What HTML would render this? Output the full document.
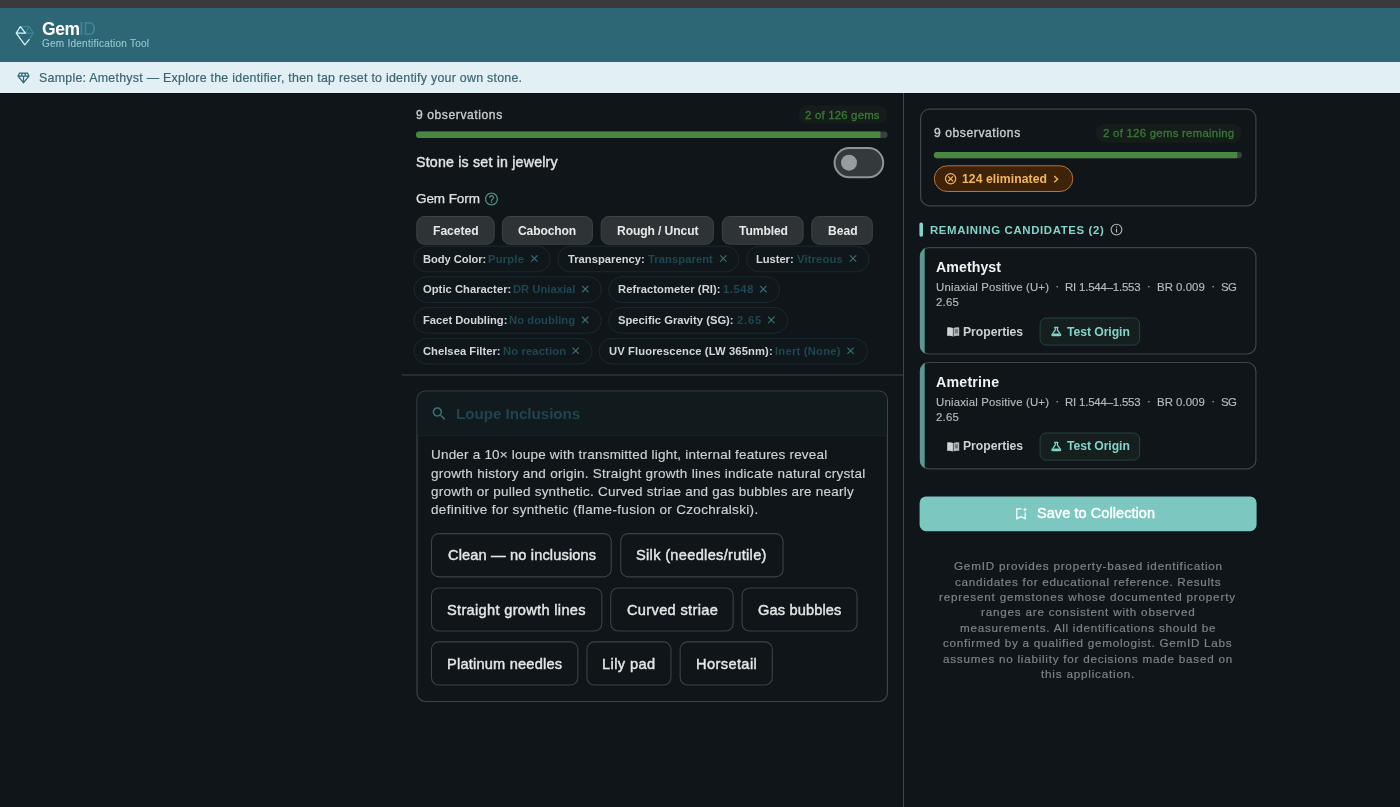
<!DOCTYPE html>
<html lang="en"><head><meta charset="utf-8"><title>GemID</title>
<style>
html,body{margin:0;padding:0;}
body{width:1400px;height:807px;overflow:hidden;position:relative;background:#0f1518;font-family:"Liberation Sans",sans-serif;-webkit-font-smoothing:antialiased;}
.r{position:absolute;box-sizing:border-box;display:block;}
.t{position:absolute;white-space:nowrap;line-height:1;margin:0;padding:0;will-change:transform;}
</style></head><body>
<svg class="r" style="left:0;top:0" width="1400" height="807" viewBox="0 0 1400 807" fill="none">
<path d="M0 0H1400V8H0V0Z" fill="#3a3a3a"/>
<path d="M0 8H1400V62H0V8Z" fill="#2d6775"/>
<path d="M0 62H1400V93H0V62Z" fill="#e2eff4"/>
<path d="M0 93H1400V94H0V93Z" fill="#0b1013"/>
<svg x="15.00" y="25.00" width="20" height="22" viewBox="15 25 20 22" fill="none" overflow="visible"><g stroke-width="1.25" stroke-linejoin="round" stroke-linecap="round"><path d="M20.4 26.7 H29.1 L33.2 33.2 L29.1 39.7 M25.4 33.2 H33.2 M29.1 26.7 L25.4 33.2" stroke="#3f8492"/><path d="M29.1 39.7 L24.8 44.9 L16.2 33.2 L20.4 26.7 L25.4 33.2 H16.2" stroke="#d6f5fa"/></g></svg>
<svg x="16.06" y="70.64" width="14.9" height="14.9" viewBox="0 0 24 24" fill="none" overflow="visible"><path d="M19 3H5L2 9l10 12L22 9l-3-6zM9.62 8l1.5-3h1.76l1.5 3H9.62zM11 10v6.68L5.44 10H11zm2 0h5.56L13 16.68V10zm6.26-2h-2.65l-1.5-3h2.65l1.5 3zM6.24 5h2.65l-1.5 3H4.74l1.5-3z" fill="#2f6c7a"/></svg>
<path d="M903 93H904V807H903V93Z" fill="#3f4548"/>
<path d="M402 374.5H903V375.5H402V374.5Z" fill="#3f4548"/>
<path d="M807.7 105.2H878.3A9.3 9.3 0 0 1 887.6 114.5V114.5A9.3 9.3 0 0 1 878.3 123.8H807.7A9.3 9.3 0 0 1 798.4 114.5V114.5A9.3 9.3 0 0 1 807.7 105.2Z" fill="#141d19"/>
<path d="M419.2 131.6H884.4A3.2 3.2 0 0 1 887.6 134.8V134.8A3.2 3.2 0 0 1 884.4 138H419.2A3.2 3.2 0 0 1 416 134.8V134.8A3.2 3.2 0 0 1 419.2 131.6Z" fill="#3a3f42"/>
<path d="M419.2 131.6H880.4V138H419.2A3.2 3.2 0 0 1 416 134.8V134.8A3.2 3.2 0 0 1 419.2 131.6Z" fill="#4a8740"/>
<path d="M849.2 148.1H868.6A14.6 14.6 0 0 1 883.2 162.7V162.7A14.6 14.6 0 0 1 868.6 177.3H849.2A14.6 14.6 0 0 1 834.6 162.7V162.7A14.6 14.6 0 0 1 849.2 148.1Z" fill="#34393b" stroke="#8e9497" stroke-width="2"/>
<path d="M849 154.7H849A8 8 0 0 1 857 162.7V162.7A8 8 0 0 1 849 170.7H849A8 8 0 0 1 841 162.7V162.7A8 8 0 0 1 849 154.7Z" fill="#969c9f"/>
<svg x="483.70" y="191.20" width="15.6" height="15.6" viewBox="0 0 24 24" fill="none" overflow="visible"><path d="M11 18h2v-2h-2v2zm1-16C6.48 2 2 6.48 2 12s4.48 10 10 10 10-4.48 10-10S17.52 2 12 2zm0 18c-4.41 0-8-3.59-8-8s3.59-8 8-8 8 3.59 8 8-3.59 8-8 8zm0-14c-2.21 0-4 1.79-4 4h2c0-1.1.9-2 2-2s2 .9 2 2c0 2-3 1.75-3 5h2c0-2.25 3-2.5 3-5 0-2.21-1.79-4-4-4z" fill="#4b8b86"/></svg>
<path d="M424.3 216.5H486.7A7.5 7.5 0 0 1 494.2 224V236.7A7.5 7.5 0 0 1 486.7 244.2H424.3A7.5 7.5 0 0 1 416.8 236.7V224A7.5 7.5 0 0 1 424.3 216.5Z" fill="#2e3335" stroke="#3e4346" stroke-width="1"/>
<path d="M509.9 216.5H584.9A7.5 7.5 0 0 1 592.4 224V236.7A7.5 7.5 0 0 1 584.9 244.2H509.9A7.5 7.5 0 0 1 502.4 236.7V224A7.5 7.5 0 0 1 509.9 216.5Z" fill="#2e3335" stroke="#3e4346" stroke-width="1"/>
<path d="M608.7 216.5H705.9A7.5 7.5 0 0 1 713.4 224V236.7A7.5 7.5 0 0 1 705.9 244.2H608.7A7.5 7.5 0 0 1 601.2 236.7V224A7.5 7.5 0 0 1 608.7 216.5Z" fill="#2e3335" stroke="#3e4346" stroke-width="1"/>
<path d="M729.8 216.5H795.6A7.5 7.5 0 0 1 803.1 224V236.7A7.5 7.5 0 0 1 795.6 244.2H729.8A7.5 7.5 0 0 1 722.3 236.7V224A7.5 7.5 0 0 1 729.8 216.5Z" fill="#2e3335" stroke="#3e4346" stroke-width="1"/>
<path d="M819.3 216.5H864.8A7.5 7.5 0 0 1 872.3 224V236.7A7.5 7.5 0 0 1 864.8 244.2H819.3A7.5 7.5 0 0 1 811.8 236.7V224A7.5 7.5 0 0 1 819.3 216.5Z" fill="#2e3335" stroke="#3e4346" stroke-width="1"/>
<path d="M426.7 246.2H537.5A12.8 12.8 0 0 1 550.3 259V259A12.8 12.8 0 0 1 537.5 271.8H426.7A12.8 12.8 0 0 1 413.9 259V259A12.8 12.8 0 0 1 426.7 246.2Z" fill="#0f171a" stroke="#1a2a2f" stroke-width="1"/>
<svg x="529.35" y="253.50" width="10" height="10" viewBox="-5 -5 10 10" fill="none" overflow="visible"><path d="M-3.15 -3.15L3.15 3.15M3.15 -3.15L-3.15 3.15" stroke="#3c6f79" stroke-width="1.1"/></svg>
<path d="M570.6 246.2H726A12.8 12.8 0 0 1 738.8 259V259A12.8 12.8 0 0 1 726 271.8H570.6A12.8 12.8 0 0 1 557.8 259V259A12.8 12.8 0 0 1 570.6 246.2Z" fill="#0f171a" stroke="#1a2a2f" stroke-width="1"/>
<svg x="718.35" y="253.50" width="10" height="10" viewBox="-5 -5 10 10" fill="none" overflow="visible"><path d="M-3.15 -3.15L3.15 3.15M3.15 -3.15L-3.15 3.15" stroke="#3c6f79" stroke-width="1.1"/></svg>
<path d="M759.3 246.2H856.3A12.8 12.8 0 0 1 869.1 259V259A12.8 12.8 0 0 1 856.3 271.8H759.3A12.8 12.8 0 0 1 746.5 259V259A12.8 12.8 0 0 1 759.3 246.2Z" fill="#0f171a" stroke="#1a2a2f" stroke-width="1"/>
<svg x="848.05" y="253.50" width="10" height="10" viewBox="-5 -5 10 10" fill="none" overflow="visible"><path d="M-3.15 -3.15L3.15 3.15M3.15 -3.15L-3.15 3.15" stroke="#3c6f79" stroke-width="1.1"/></svg>
<path d="M426.7 276.8H588.5A12.8 12.8 0 0 1 601.3 289.6V289.6A12.8 12.8 0 0 1 588.5 302.4H426.7A12.8 12.8 0 0 1 413.9 289.6V289.6A12.8 12.8 0 0 1 426.7 276.8Z" fill="#0f171a" stroke="#1a2a2f" stroke-width="1"/>
<svg x="580.30" y="284.10" width="10" height="10" viewBox="-5 -5 10 10" fill="none" overflow="visible"><path d="M-3.15 -3.15L3.15 3.15M3.15 -3.15L-3.15 3.15" stroke="#3c6f79" stroke-width="1.1"/></svg>
<path d="M621.5 276.8H766.8A12.8 12.8 0 0 1 779.6 289.6V289.6A12.8 12.8 0 0 1 766.8 302.4H621.5A12.8 12.8 0 0 1 608.7 289.6V289.6A12.8 12.8 0 0 1 621.5 276.8Z" fill="#0f171a" stroke="#1a2a2f" stroke-width="1"/>
<svg x="758.35" y="284.10" width="10" height="10" viewBox="-5 -5 10 10" fill="none" overflow="visible"><path d="M-3.15 -3.15L3.15 3.15M3.15 -3.15L-3.15 3.15" stroke="#3c6f79" stroke-width="1.1"/></svg>
<path d="M426.7 307.6H588.5A12.8 12.8 0 0 1 601.3 320.4V320.4A12.8 12.8 0 0 1 588.5 333.2H426.7A12.8 12.8 0 0 1 413.9 320.4V320.4A12.8 12.8 0 0 1 426.7 307.6Z" fill="#0f171a" stroke="#1a2a2f" stroke-width="1"/>
<svg x="580.20" y="314.90" width="10" height="10" viewBox="-5 -5 10 10" fill="none" overflow="visible"><path d="M-3.15 -3.15L3.15 3.15M3.15 -3.15L-3.15 3.15" stroke="#3c6f79" stroke-width="1.1"/></svg>
<path d="M621.5 307.6H774.9A12.8 12.8 0 0 1 787.7 320.4V320.4A12.8 12.8 0 0 1 774.9 333.2H621.5A12.8 12.8 0 0 1 608.7 320.4V320.4A12.8 12.8 0 0 1 621.5 307.6Z" fill="#0f171a" stroke="#1a2a2f" stroke-width="1"/>
<svg x="766.35" y="314.90" width="10" height="10" viewBox="-5 -5 10 10" fill="none" overflow="visible"><path d="M-3.15 -3.15L3.15 3.15M3.15 -3.15L-3.15 3.15" stroke="#3c6f79" stroke-width="1.1"/></svg>
<path d="M426.7 338.4H579.3A12.8 12.8 0 0 1 592.1 351.2V351.2A12.8 12.8 0 0 1 579.3 364H426.7A12.8 12.8 0 0 1 413.9 351.2V351.2A12.8 12.8 0 0 1 426.7 338.4Z" fill="#0f171a" stroke="#1a2a2f" stroke-width="1"/>
<svg x="570.65" y="345.70" width="10" height="10" viewBox="-5 -5 10 10" fill="none" overflow="visible"><path d="M-3.15 -3.15L3.15 3.15M3.15 -3.15L-3.15 3.15" stroke="#3c6f79" stroke-width="1.1"/></svg>
<path d="M611.9 338.4H854.6A12.8 12.8 0 0 1 867.4 351.2V351.2A12.8 12.8 0 0 1 854.6 364H611.9A12.8 12.8 0 0 1 599.1 351.2V351.2A12.8 12.8 0 0 1 611.9 338.4Z" fill="#0f171a" stroke="#1a2a2f" stroke-width="1"/>
<svg x="845.55" y="345.70" width="10" height="10" viewBox="-5 -5 10 10" fill="none" overflow="visible"><path d="M-3.15 -3.15L3.15 3.15M3.15 -3.15L-3.15 3.15" stroke="#3c6f79" stroke-width="1.1"/></svg>
<path d="M425.4 391.1H879A8.4 8.4 0 0 1 887.4 399.5V693.1A8.4 8.4 0 0 1 879 701.5H425.4A8.4 8.4 0 0 1 417 693.1V399.5A8.4 8.4 0 0 1 425.4 391.1Z" fill="#0f1518" stroke="#3d4447" stroke-width="1.2"/>
<path d="M425.5 391.6H878.9A8 8 0 0 1 886.9 399.6V435.2H417.5V399.6A8 8 0 0 1 425.5 391.6Z" fill="#111a1d"/>
<path d="M417.5 435.2H886.9V436.2H417.5V435.2Z" fill="#1a2529"/>
<svg x="430.54" y="405.14" width="17.28" height="17.28" viewBox="0 0 24 24" fill="none" overflow="visible"><path d="M15.5 14h-.79l-.28-.27C15.41 12.59 16 11.11 16 9.5 16 5.91 13.09 3 9.5 3S3 5.91 3 9.5 5.91 16 9.5 16c1.61 0 3.09-.59 4.23-1.57l.27.28v.79l5 4.99L20.49 19l-4.99-5zm-6 0C7.01 14 5 11.99 5 9.5S7.01 5 9.5 5 14 7.01 14 9.5 11.99 14 9.5 14z" fill="#3a707c"/></svg>
<path d="M438.9 533.65H603.8A7.45 7.45 0 0 1 611.25 541.1V569.4A7.45 7.45 0 0 1 603.8 576.85H438.9A7.45 7.45 0 0 1 431.45 569.4V541.1A7.45 7.45 0 0 1 438.9 533.65Z" fill="#0f1518" stroke="#3c4245" stroke-width="1.1"/>
<path d="M628.2 533.65H775.6A7.45 7.45 0 0 1 783.05 541.1V569.4A7.45 7.45 0 0 1 775.6 576.85H628.2A7.45 7.45 0 0 1 620.75 569.4V541.1A7.45 7.45 0 0 1 628.2 533.65Z" fill="#0f1518" stroke="#3c4245" stroke-width="1.1"/>
<path d="M438.9 588.05H594.4A7.45 7.45 0 0 1 601.85 595.5V623.6A7.45 7.45 0 0 1 594.4 631.05H438.9A7.45 7.45 0 0 1 431.45 623.6V595.5A7.45 7.45 0 0 1 438.9 588.05Z" fill="#0f1518" stroke="#3c4245" stroke-width="1.1"/>
<path d="M618.2 588.05H725.7A7.45 7.45 0 0 1 733.15 595.5V623.6A7.45 7.45 0 0 1 725.7 631.05H618.2A7.45 7.45 0 0 1 610.75 623.6V595.5A7.45 7.45 0 0 1 618.2 588.05Z" fill="#0f1518" stroke="#3c4245" stroke-width="1.1"/>
<path d="M749.5 588.05H849.6A7.45 7.45 0 0 1 857.05 595.5V623.6A7.45 7.45 0 0 1 849.6 631.05H749.5A7.45 7.45 0 0 1 742.05 623.6V595.5A7.45 7.45 0 0 1 749.5 588.05Z" fill="#0f1518" stroke="#3c4245" stroke-width="1.1"/>
<path d="M438.9 641.85H570.4A7.45 7.45 0 0 1 577.85 649.3V677.6A7.45 7.45 0 0 1 570.4 685.05H438.9A7.45 7.45 0 0 1 431.45 677.6V649.3A7.45 7.45 0 0 1 438.9 641.85Z" fill="#0f1518" stroke="#3c4245" stroke-width="1.1"/>
<path d="M594.4 641.85H663.5A7.45 7.45 0 0 1 670.95 649.3V677.6A7.45 7.45 0 0 1 663.5 685.05H594.4A7.45 7.45 0 0 1 586.95 677.6V649.3A7.45 7.45 0 0 1 594.4 641.85Z" fill="#0f1518" stroke="#3c4245" stroke-width="1.1"/>
<path d="M687.6 641.85H764.9A7.45 7.45 0 0 1 772.35 649.3V677.6A7.45 7.45 0 0 1 764.9 685.05H687.6A7.45 7.45 0 0 1 680.15 677.6V649.3A7.45 7.45 0 0 1 687.6 641.85Z" fill="#0f1518" stroke="#3c4245" stroke-width="1.1"/>
<path d="M929.5 109.2H1247A8.9 8.9 0 0 1 1255.9 118.1V196.9A8.9 8.9 0 0 1 1247 205.8H929.5A8.9 8.9 0 0 1 920.6 196.9V118.1A8.9 8.9 0 0 1 929.5 109.2Z" fill="#0f1518" stroke="#3f4548" stroke-width="1.2"/>
<path d="M1105.4 123.4H1232.1A9.7 9.7 0 0 1 1241.8 133.1V133.1A9.7 9.7 0 0 1 1232.1 142.8H1105.4A9.7 9.7 0 0 1 1095.7 133.1V133.1A9.7 9.7 0 0 1 1105.4 123.4Z" fill="#141d19"/>
<path d="M936.9 152H1238.9A3.1 3.1 0 0 1 1242 155.1V155.1A3.1 3.1 0 0 1 1238.9 158.2H936.9A3.1 3.1 0 0 1 933.8 155.1V155.1A3.1 3.1 0 0 1 936.9 152Z" fill="#3a3f42"/>
<path d="M936.9 152H1237.2V158.2H936.9A3.1 3.1 0 0 1 933.8 155.1V155.1A3.1 3.1 0 0 1 936.9 152Z" fill="#4a8740"/>
<path d="M947.15 165.8H1059.95A12.85 12.85 0 0 1 1072.8 178.65V178.65A12.85 12.85 0 0 1 1059.95 191.5H947.15A12.85 12.85 0 0 1 934.3 178.65V178.65A12.85 12.85 0 0 1 947.15 165.8Z" fill="#3f2309" stroke="#bb7236" stroke-width="1"/>
<svg x="943.60" y="171.80" width="14" height="14" viewBox="-7 -7 14 14" fill="none" overflow="visible"><circle r="5.1" stroke="#f3b85e" stroke-width="1.2"/><path d="M-2.45 -2.45L2.45 2.45M2.45 -2.45L-2.45 2.45" stroke="#f3b85e" stroke-width="1.25"/></svg>
<svg x="1051.00" y="173.00" width="10" height="12" viewBox="1051 173 10 12" fill="none" overflow="visible"><path d="M1054.2 176.1L1057.6 179.15L1054.2 182.2" stroke="#f3b85e" stroke-width="1.4"/></svg>
<path d="M921.1 222.4H921.3A1.7 1.7 0 0 1 923 224.1V235.1A1.7 1.7 0 0 1 921.3 236.8H921.1A1.7 1.7 0 0 1 919.4 235.1V224.1A1.7 1.7 0 0 1 921.1 222.4Z" fill="#84d3c9"/>
<svg x="1109.50" y="222.60" width="14" height="14" viewBox="-7 -7 14 14" fill="none" overflow="visible"><circle r="5.4" stroke="#b4b9bb" stroke-width="1.1"/><path d="M0 -0.9V2.9" stroke="#b4b9bb" stroke-width="1.2"/><circle cy="-2.7" r="0.7" fill="#b4b9bb"/></svg>
<path d="M929.2 247.7H1247A8.9 8.9 0 0 1 1255.9 256.6V345.1A8.9 8.9 0 0 1 1247 354H929.2A8.9 8.9 0 0 1 920.3 345.1V256.6A8.9 8.9 0 0 1 929.2 247.7Z" fill="#0f1518" stroke="#3f4548" stroke-width="1.2"/>
<clipPath id="c59"><rect x="919.70" y="247.10" width="5.0" height="107.50"/></clipPath><path d="M929.2 247.1H1247A9.5 9.5 0 0 1 1256.5 256.6V345.1A9.5 9.5 0 0 1 1247 354.6H929.2A9.5 9.5 0 0 1 919.7 345.1V256.6A9.5 9.5 0 0 1 929.2 247.1Z" fill="#5c9893" clip-path="url(#c59)"/>
<svg x="1055.20" y="284.70" width="4" height="4" viewBox="-2 -2 4 4" fill="none" overflow="visible"><circle r="0.75" fill="#b6bbbd"/></svg>
<svg x="1146.90" y="284.70" width="4" height="4" viewBox="-2 -2 4 4" fill="none" overflow="visible"><circle r="0.75" fill="#b6bbbd"/></svg>
<svg x="1211.10" y="284.70" width="4" height="4" viewBox="-2 -2 4 4" fill="none" overflow="visible"><circle r="0.75" fill="#b6bbbd"/></svg>
<svg x="946.70" y="326.50" width="13" height="11" viewBox="-0.5 -0.5 13 11" fill="none" overflow="visible"><path d="M0 0.5C1.8 0 4 0.2 5.7 1.1V9.6C4 8.7 1.8 8.5 0 9Z" fill="#d0d4d6"/><path d="M6.3 1.1C8 0.2 10.2 0 12 0.5V9C10.2 8.5 8 8.7 6.3 9.6Z" fill="#b4b9bb"/><rect x="7.7" y="2.3" width="3" height="4" fill="#70767a"/></svg>
<path d="M1046.1 318H1133.6A6 6 0 0 1 1139.6 324V339.1A6 6 0 0 1 1133.6 345.1H1046.1A6 6 0 0 1 1040.1 339.1V324A6 6 0 0 1 1046.1 318Z" fill="#141f1e" stroke="#27433f" stroke-width="1"/>
<svg x="1050.30" y="326.00" width="12" height="11" viewBox="-1 -1 12 11" fill="none" overflow="visible"><path d="M3.3 0.3H6.7M3.9 0.3V3.2L0.7 7.7Q0.4 8.5 1.3 8.5H8.7Q9.6 8.5 9.3 7.7L6.1 3.2V0.3" stroke="#84d3c9" stroke-width="1.3" stroke-linejoin="round" stroke-linecap="round"/><path d="M2.2 6.6H7.8L8.6 8.2H1.4Z" fill="#84d3c9"/></svg>
<path d="M929.2 362.5H1247A8.9 8.9 0 0 1 1255.9 371.4V459.9A8.9 8.9 0 0 1 1247 468.8H929.2A8.9 8.9 0 0 1 920.3 459.9V371.4A8.9 8.9 0 0 1 929.2 362.5Z" fill="#0f1518" stroke="#3f4548" stroke-width="1.2"/>
<clipPath id="c67"><rect x="919.70" y="361.90" width="5.0" height="107.50"/></clipPath><path d="M929.2 361.9H1247A9.5 9.5 0 0 1 1256.5 371.4V459.9A9.5 9.5 0 0 1 1247 469.4H929.2A9.5 9.5 0 0 1 919.7 459.9V371.4A9.5 9.5 0 0 1 929.2 361.9Z" fill="#5c9893" clip-path="url(#c67)"/>
<svg x="1055.20" y="399.70" width="4" height="4" viewBox="-2 -2 4 4" fill="none" overflow="visible"><circle r="0.75" fill="#b6bbbd"/></svg>
<svg x="1146.90" y="399.70" width="4" height="4" viewBox="-2 -2 4 4" fill="none" overflow="visible"><circle r="0.75" fill="#b6bbbd"/></svg>
<svg x="1211.10" y="399.70" width="4" height="4" viewBox="-2 -2 4 4" fill="none" overflow="visible"><circle r="0.75" fill="#b6bbbd"/></svg>
<svg x="946.70" y="441.50" width="13" height="11" viewBox="-0.5 -0.5 13 11" fill="none" overflow="visible"><path d="M0 0.5C1.8 0 4 0.2 5.7 1.1V9.6C4 8.7 1.8 8.5 0 9Z" fill="#d0d4d6"/><path d="M6.3 1.1C8 0.2 10.2 0 12 0.5V9C10.2 8.5 8 8.7 6.3 9.6Z" fill="#b4b9bb"/><rect x="7.7" y="2.3" width="3" height="4" fill="#70767a"/></svg>
<path d="M1046.1 433H1133.6A6 6 0 0 1 1139.6 439V454.1A6 6 0 0 1 1133.6 460.1H1046.1A6 6 0 0 1 1040.1 454.1V439A6 6 0 0 1 1046.1 433Z" fill="#141f1e" stroke="#27433f" stroke-width="1"/>
<svg x="1050.30" y="441.00" width="12" height="11" viewBox="-1 -1 12 11" fill="none" overflow="visible"><path d="M3.3 0.3H6.7M3.9 0.3V3.2L0.7 7.7Q0.4 8.5 1.3 8.5H8.7Q9.6 8.5 9.3 7.7L6.1 3.2V0.3" stroke="#84d3c9" stroke-width="1.3" stroke-linejoin="round" stroke-linecap="round"/><path d="M2.2 6.6H7.8L8.6 8.2H1.4Z" fill="#84d3c9"/></svg>
<path d="M926.1 496.4H1250.1A6.5 6.5 0 0 1 1256.6 502.9V524.7A6.5 6.5 0 0 1 1250.1 531.2H926.1A6.5 6.5 0 0 1 919.6 524.7V502.9A6.5 6.5 0 0 1 926.1 496.4Z" fill="#7cc7bf"/>
<svg x="1015.10" y="506.90" width="13" height="14" viewBox="-1 -1 13 14" fill="none" overflow="visible"><path d="M5.4 0.9H0.7V10.8L4.9 8.8L9.1 10.8V4.6" stroke="#f2fffd" stroke-width="1.3" stroke-linejoin="miter"/><path d="M8.9 -0.6L9.6 1L11.2 1.7L9.6 2.4L8.9 4L8.2 2.4L6.6 1.7L8.2 1Z" fill="#f2fffd"/></svg>
</svg>
<span class="t" id="h_gem" style="left:42.12px;top:21.00px;font-size:17.5px;color:#ffffff;letter-spacing:-0.387px;font-weight:700;">Gem</span>
<span class="t" id="h_id" style="left:79.05px;top:21.00px;font-size:17.5px;color:#3f8695;letter-spacing:-0.536px;">ID</span>
<span class="t" id="h_sub" style="left:42.40px;top:39.00px;font-size:10.0px;color:#93c7ce;letter-spacing:0.248px;-webkit-text-stroke:0.12px #93c7ce;">Gem Identification Tool</span>
<span class="t" id="ban" style="left:39.01px;top:72.00px;font-size:12.4px;color:#3b6571;letter-spacing:0.257px;-webkit-text-stroke:0.2px #3b6571;">Sample: Amethyst — Explore the identifier, then tap reset to identify your own stone.</span>
<span class="t" id="l_obs" style="left:416.27px;top:109.00px;font-size:12.1px;color:#c9cdcf;letter-spacing:0.579px;-webkit-text-stroke:0.35px #c9cdcf;">9 observations</span>
<span class="t" id="l_badge" style="left:805.29px;top:110.00px;font-size:11.4px;color:#3c7939;letter-spacing:0.198px;-webkit-text-stroke:0.3px #3c7939;">2 of 126 gems</span>
<span class="t" id="l_stone" style="left:416.45px;top:155.00px;font-size:14.2px;color:#e1e4e6;letter-spacing:0.200px;-webkit-text-stroke:0.4px #e1e4e6;">Stone is set in jewelry</span>
<span class="t" id="l_form" style="left:416.15px;top:192.00px;font-size:13.5px;color:#dfe2e4;letter-spacing:-0.077px;-webkit-text-stroke:0.25px #dfe2e4;">Gem Form</span>
<span class="t" id="chip0" style="left:432.64px;top:225.00px;font-size:12.1px;color:#e6e8e9;letter-spacing:-0.010px;font-weight:700;">Faceted</span>
<span class="t" id="chip1" style="left:518.32px;top:225.00px;font-size:12.1px;color:#e6e8e9;letter-spacing:-0.127px;font-weight:700;">Cabochon</span>
<span class="t" id="chip2" style="left:616.64px;top:225.00px;font-size:12.1px;color:#e6e8e9;letter-spacing:-0.093px;font-weight:700;">Rough / Uncut</span>
<span class="t" id="chip3" style="left:738.78px;top:225.00px;font-size:12.1px;color:#e6e8e9;letter-spacing:-0.080px;font-weight:700;">Tumbled</span>
<span class="t" id="chip4" style="left:827.54px;top:225.00px;font-size:12.1px;color:#e6e8e9;letter-spacing:0.013px;font-weight:700;">Bead</span>
<span class="t" id="fl0" style="left:422.91px;top:254.00px;font-size:11.2px;color:#d3d7d9;letter-spacing:-0.084px;font-weight:700;">Body Color:</span>
<span class="t" id="fv0" style="left:488.21px;top:254.00px;font-size:11.2px;color:#1f4652;letter-spacing:0.214px;font-weight:700;">Purple</span>
<span class="t" id="fl1" style="left:567.90px;top:254.00px;font-size:11.2px;color:#d3d7d9;letter-spacing:0.019px;font-weight:700;">Transparency:</span>
<span class="t" id="fv1" style="left:648.20px;top:254.00px;font-size:11.2px;color:#1f4652;letter-spacing:0.079px;font-weight:700;">Transparent</span>
<span class="t" id="fl2" style="left:756.41px;top:254.00px;font-size:11.2px;color:#d3d7d9;letter-spacing:-0.045px;font-weight:700;">Luster:</span>
<span class="t" id="fv2" style="left:797.18px;top:254.00px;font-size:11.2px;color:#1f4652;letter-spacing:0.168px;font-weight:700;">Vitreous</span>
<span class="t" id="fl3" style="left:423.13px;top:284.00px;font-size:11.2px;color:#d3d7d9;letter-spacing:0.041px;font-weight:700;">Optic Character:</span>
<span class="t" id="fv3" style="left:513.31px;top:284.00px;font-size:11.2px;color:#1f4652;letter-spacing:0.024px;font-weight:700;">DR Uniaxial</span>
<span class="t" id="fl4" style="left:618.21px;top:284.00px;font-size:11.2px;color:#d3d7d9;letter-spacing:0.065px;font-weight:700;">Refractometer (RI):</span>
<span class="t" id="fv4" style="left:722.86px;top:284.00px;font-size:11.2px;color:#1f4652;letter-spacing:0.596px;font-weight:700;">1.548</span>
<span class="t" id="fl5" style="left:422.91px;top:315.00px;font-size:11.2px;color:#d3d7d9;letter-spacing:-0.010px;font-weight:700;">Facet Doubling:</span>
<span class="t" id="fv5" style="left:509.21px;top:315.00px;font-size:11.2px;color:#1f4652;letter-spacing:0.085px;font-weight:700;">No doubling</span>
<span class="t" id="fl6" style="left:618.45px;top:315.00px;font-size:11.2px;color:#d3d7d9;letter-spacing:0.027px;font-weight:700;">Specific Gravity (SG):</span>
<span class="t" id="fv6" style="left:737.06px;top:315.00px;font-size:11.2px;color:#1f4652;letter-spacing:0.798px;font-weight:700;">2.65</span>
<span class="t" id="fl7" style="left:423.14px;top:346.00px;font-size:11.2px;color:#d3d7d9;letter-spacing:0.032px;font-weight:700;">Chelsea Filter:</span>
<span class="t" id="fv7" style="left:502.71px;top:346.00px;font-size:11.2px;color:#1f4652;letter-spacing:0.147px;font-weight:700;">No reaction</span>
<span class="t" id="fl8" style="left:609.09px;top:346.00px;font-size:11.2px;color:#d3d7d9;letter-spacing:0.124px;font-weight:700;">UV Fluorescence (LW 365nm):</span>
<span class="t" id="fv8" style="left:774.61px;top:346.00px;font-size:11.2px;color:#1f4652;letter-spacing:0.245px;font-weight:700;">Inert (None)</span>
<span class="t" id="lp_title" style="left:455.99px;top:406.00px;font-size:15.2px;color:#21444f;letter-spacing:-0.041px;font-weight:700;">Loupe Inclusions</span>
<span class="t" id="p1" style="left:430.87px;top:448.00px;font-size:13.5px;color:#ced2d4;letter-spacing:0.202px;-webkit-text-stroke:0.15px #ced2d4;">Under a 10× loupe with transmitted light, internal features reveal</span>
<span class="t" id="p2" style="left:430.98px;top:467.00px;font-size:13.5px;color:#ced2d4;letter-spacing:0.268px;-webkit-text-stroke:0.15px #ced2d4;">growth history and origin. Straight growth lines indicate natural crystal</span>
<span class="t" id="p3" style="left:430.98px;top:485.00px;font-size:13.5px;color:#ced2d4;letter-spacing:0.227px;-webkit-text-stroke:0.15px #ced2d4;">growth or pulled synthetic. Curved striae and gas bubbles are nearly</span>
<span class="t" id="p4" style="left:430.97px;top:503.00px;font-size:13.5px;color:#ced2d4;letter-spacing:0.335px;-webkit-text-stroke:0.15px #ced2d4;">definitive for synthetic (flame-fusion or Czochralski).</span>
<span class="t" id="ib0" style="left:447.54px;top:548.00px;font-size:14.6px;color:#e4e7e8;letter-spacing:0.147px;-webkit-text-stroke:0.42px #e4e7e8;">Clean — no inclusions</span>
<span class="t" id="ib1" style="left:636.34px;top:548.00px;font-size:14.6px;color:#e4e7e8;letter-spacing:0.319px;-webkit-text-stroke:0.42px #e4e7e8;">Silk (needles/rutile)</span>
<span class="t" id="ib2" style="left:447.44px;top:603.00px;font-size:14.6px;color:#e4e7e8;letter-spacing:0.317px;-webkit-text-stroke:0.42px #e4e7e8;">Straight growth lines</span>
<span class="t" id="ib3" style="left:626.64px;top:603.00px;font-size:14.6px;color:#e4e7e8;letter-spacing:0.332px;-webkit-text-stroke:0.42px #e4e7e8;">Curved striae</span>
<span class="t" id="ib4" style="left:757.72px;top:603.00px;font-size:14.6px;color:#e4e7e8;letter-spacing:0.144px;-webkit-text-stroke:0.42px #e4e7e8;">Gas bubbles</span>
<span class="t" id="ib5" style="left:446.83px;top:657.00px;font-size:14.6px;color:#e4e7e8;letter-spacing:0.208px;-webkit-text-stroke:0.42px #e4e7e8;">Platinum needles</span>
<span class="t" id="ib6" style="left:602.23px;top:657.00px;font-size:14.6px;color:#e4e7e8;letter-spacing:0.413px;-webkit-text-stroke:0.42px #e4e7e8;">Lily pad</span>
<span class="t" id="ib7" style="left:695.63px;top:657.00px;font-size:14.6px;color:#e4e7e8;letter-spacing:0.398px;-webkit-text-stroke:0.42px #e4e7e8;">Horsetail</span>
<span class="t" id="r_obs" style="left:934.17px;top:127.00px;font-size:12.1px;color:#c9cdcf;letter-spacing:0.579px;-webkit-text-stroke:0.35px #c9cdcf;">9 observations</span>
<span class="t" id="r_badge" style="left:1103.19px;top:128.00px;font-size:11.4px;color:#3c7939;letter-spacing:0.264px;-webkit-text-stroke:0.3px #3c7939;">2 of 126 gems remaining</span>
<span class="t" id="r_elim" style="left:961.99px;top:173.00px;font-size:12.2px;color:#f3b85e;letter-spacing:0.072px;font-weight:700;">124 eliminated</span>
<span class="t" id="r_rem" style="left:929.99px;top:225.00px;font-size:11.4px;color:#84d3c9;letter-spacing:0.627px;font-weight:700;">REMAINING CANDIDATES (2)</span>
<span class="t" id="c0_name" style="left:936.22px;top:260.00px;font-size:14.2px;color:#f0f2f3;letter-spacing:0.057px;font-weight:700;">Amethyst</span>
<span class="t" id="c0_s10" style="left:935.94px;top:282.00px;font-size:11.4px;color:#b6bbbd;letter-spacing:0.181px;-webkit-text-stroke:0.15px #b6bbbd;">Uniaxial Positive (U+)</span>
<span class="t" id="c0_s11" style="left:1064.97px;top:282.00px;font-size:11.4px;color:#b6bbbd;letter-spacing:-0.176px;-webkit-text-stroke:0.15px #b6bbbd;">RI 1.544–1.553</span>
<span class="t" id="c0_s12" style="left:1156.97px;top:282.00px;font-size:11.4px;color:#b6bbbd;letter-spacing:0.042px;-webkit-text-stroke:0.15px #b6bbbd;">BR 0.009</span>
<span class="t" id="c0_s13" style="left:1221.11px;top:282.00px;font-size:11.4px;color:#b6bbbd;letter-spacing:-0.678px;-webkit-text-stroke:0.15px #b6bbbd;">SG</span>
<span class="t" id="c0_s2" style="left:936.17px;top:297.00px;font-size:11.4px;color:#b6bbbd;letter-spacing:0.257px;-webkit-text-stroke:0.15px #b6bbbd;">2.65</span>
<span class="t" id="c0_prop" style="left:962.94px;top:326.00px;font-size:12.2px;color:#cdd1d3;letter-spacing:-0.022px;font-weight:700;">Properties</span>
<span class="t" id="c0_test" style="left:1067.28px;top:326.00px;font-size:12.2px;color:#84d3c9;letter-spacing:-0.057px;font-weight:700;">Test Origin</span>
<span class="t" id="c1_name" style="left:936.22px;top:375.00px;font-size:14.2px;color:#f0f2f3;letter-spacing:0.220px;font-weight:700;">Ametrine</span>
<span class="t" id="c1_s10" style="left:935.94px;top:397.00px;font-size:11.4px;color:#b6bbbd;letter-spacing:0.181px;-webkit-text-stroke:0.15px #b6bbbd;">Uniaxial Positive (U+)</span>
<span class="t" id="c1_s11" style="left:1064.97px;top:397.00px;font-size:11.4px;color:#b6bbbd;letter-spacing:-0.176px;-webkit-text-stroke:0.15px #b6bbbd;">RI 1.544–1.553</span>
<span class="t" id="c1_s12" style="left:1156.97px;top:397.00px;font-size:11.4px;color:#b6bbbd;letter-spacing:0.042px;-webkit-text-stroke:0.15px #b6bbbd;">BR 0.009</span>
<span class="t" id="c1_s13" style="left:1221.11px;top:397.00px;font-size:11.4px;color:#b6bbbd;letter-spacing:-0.678px;-webkit-text-stroke:0.15px #b6bbbd;">SG</span>
<span class="t" id="c1_s2" style="left:936.17px;top:412.00px;font-size:11.4px;color:#b6bbbd;letter-spacing:0.257px;-webkit-text-stroke:0.15px #b6bbbd;">2.65</span>
<span class="t" id="c1_prop" style="left:962.94px;top:440.00px;font-size:12.2px;color:#cdd1d3;letter-spacing:-0.022px;font-weight:700;">Properties</span>
<span class="t" id="c1_test" style="left:1067.28px;top:440.00px;font-size:12.2px;color:#84d3c9;letter-spacing:-0.057px;font-weight:700;">Test Origin</span>
<span class="t" id="save" style="left:1036.94px;top:506.00px;font-size:14.5px;color:#ffffff;letter-spacing:0.069px;-webkit-text-stroke:0.4px #ffffff;">Save to Collection</span>
<span class="t" id="d0" style="left:953.97px;top:560.00px;font-size:11.7px;color:#7d8386;letter-spacing:0.781px;-webkit-text-stroke:0.2px #7d8386;">GemID provides property-based identification</span>
<span class="t" id="d1" style="left:955.22px;top:576.00px;font-size:11.7px;color:#7d8386;letter-spacing:0.703px;-webkit-text-stroke:0.2px #7d8386;">candidates for educational reference. Results</span>
<span class="t" id="d2" style="left:939.34px;top:591.00px;font-size:11.7px;color:#7d8386;letter-spacing:0.807px;-webkit-text-stroke:0.2px #7d8386;">represent gemstones whose documented property</span>
<span class="t" id="d3" style="left:980.94px;top:606.00px;font-size:11.7px;color:#7d8386;letter-spacing:0.781px;-webkit-text-stroke:0.2px #7d8386;">ranges are consistent with observed</span>
<span class="t" id="d4" style="left:960.14px;top:622.00px;font-size:11.7px;color:#7d8386;letter-spacing:0.749px;-webkit-text-stroke:0.2px #7d8386;">measurements. All identifications should be</span>
<span class="t" id="d5" style="left:943.32px;top:637.00px;font-size:11.7px;color:#7d8386;letter-spacing:0.724px;-webkit-text-stroke:0.2px #7d8386;">confirmed by a qualified gemologist. GemID Labs</span>
<span class="t" id="d6" style="left:943.33px;top:653.00px;font-size:11.7px;color:#7d8386;letter-spacing:0.748px;-webkit-text-stroke:0.2px #7d8386;">assumes no liability for decisions made based on</span>
<span class="t" id="d7" style="left:1041.33px;top:668.00px;font-size:11.7px;color:#7d8386;letter-spacing:0.799px;-webkit-text-stroke:0.2px #7d8386;">this application.</span>
</body></html>
